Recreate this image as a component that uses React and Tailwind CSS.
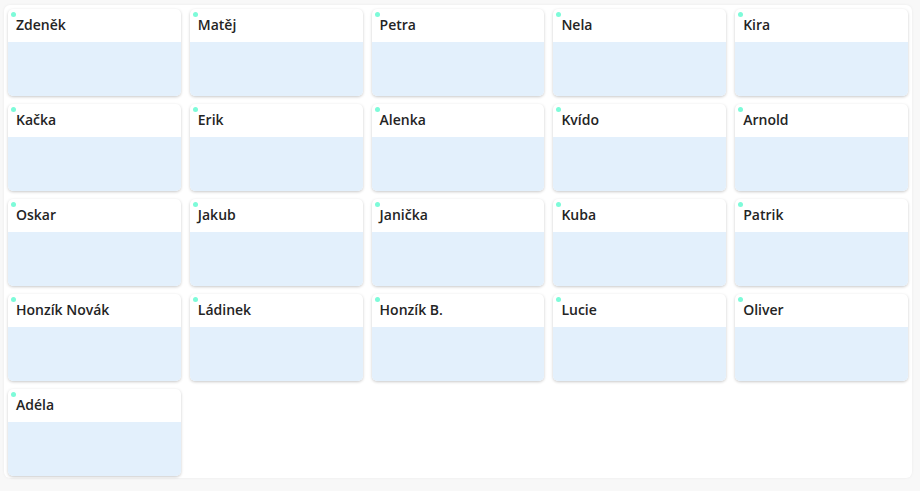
import React from "react";

const names = [
  "Zdeněk", "Matěj", "Petra", "Nela", "Kira",
  "Kačka", "Erik", "Alenka", "Kvído", "Arnold",
  "Oskar", "Jakub", "Janička", "Kuba", "Patrik",
  "Honzík Novák", "Ládinek", "Honzík B.", "Lucie", "Oliver",
  "Adéla",
];

function Card({ name }) {
  return (
    <div className="relative flex h-[87px] flex-col overflow-hidden rounded-[5px] bg-white shadow-[0_1px_3px_rgba(0,0,0,0.22)]">
      <span className="absolute left-[3px] top-[3px] h-[5px] w-[5px] rounded-full bg-[#7dfbd9]" />
      <div className="flex h-[33px] shrink-0 items-start pl-[8px] pt-[6px] text-[14px] font-[550] leading-[20px] text-[#242424]">
        {name}
      </div>
      <div className="flex-1 bg-[#e3f0fc]" />
    </div>
  );
}

export default function App() {
  return (
    <div
      className="h-[491px] w-[920px] bg-[#f8f8f8] pl-[4px] pt-[5px]"
      style={{ fontFamily: '"Segoe UI", "Open Sans", "Noto Sans", sans-serif' }}
    >
      <div className="h-[473px] w-[908px] rounded-[6px] bg-white p-[4px] shadow-[0_0_3px_rgba(0,0,0,0.06)]">
        <div className="grid grid-cols-5 gap-x-[9px] gap-y-[8px]">
          {names.map((n) => (
            <Card key={n} name={n} />
          ))}
        </div>
      </div>
    </div>
  );
}
